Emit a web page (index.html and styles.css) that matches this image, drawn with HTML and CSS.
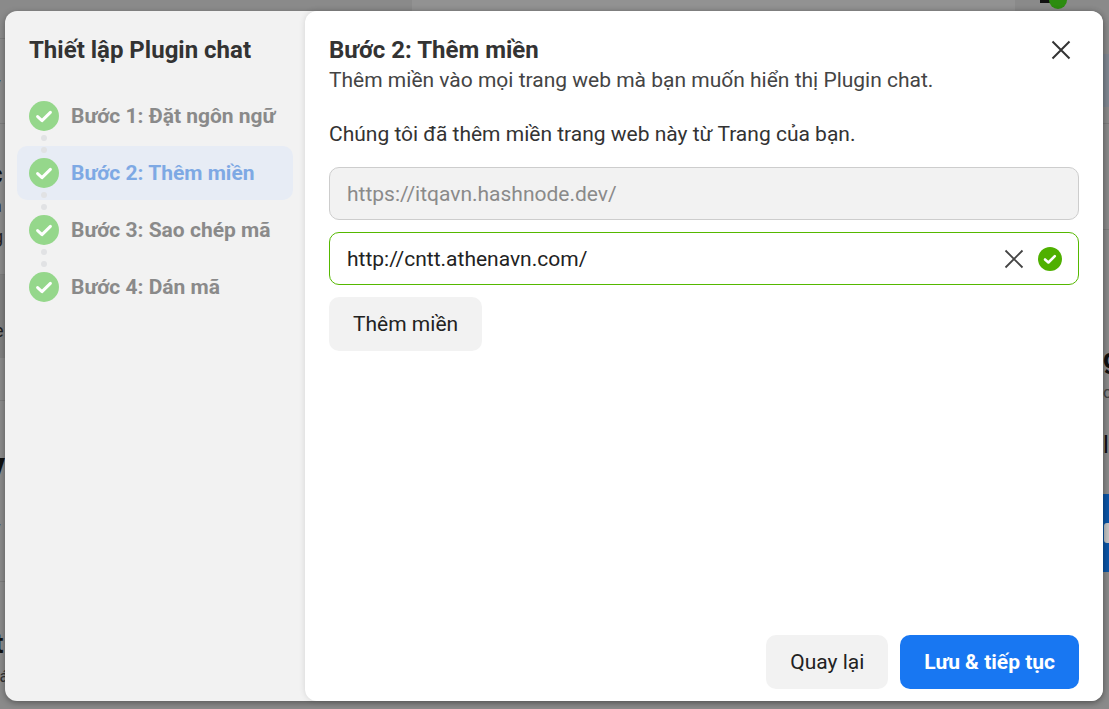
FILE: index.html
```html
<!DOCTYPE html>
<html lang="vi">
<head>
    <meta charset="UTF-8">
    <meta name="viewport" content="width=device-width, initial-scale=1.0">
    <title>Thiết lập Plugin chat</title>
    <link rel="stylesheet" href="styles.css">
</head>
<body>
    <div class="behind">
        <div class="behind-panel"></div>
        <div class="behind-band band-left"></div>
        <div class="behind-band band-right"></div>
        <div class="behind-line line-a"></div>
        <div class="behind-line line-b"></div>
        <div class="behind-line line-c"></div>
        <div class="behind-line line-d"></div>
        <div class="behind-line line-e"></div>
        <div class="behind-line line-f"></div>
        <div class="behind-line line-g"></div>
        <div class="behind-blue"></div>
        <div class="behind-avatar"></div>
        <div class="behind-dot"></div>
        <span class="behind-text bit-v">v</span>
        <span class="behind-text bit-c">c</span>
        <span class="behind-text bit-a">ả</span>
        <span class="behind-text bit-g">g</span>
        <span class="behind-text bit-e">e</span>
        <span class="behind-text bit-w">v</span>
        <span class="behind-text bit-y">v</span>
        <span class="behind-text bit-t">t</span>
        <span class="behind-text bit-s">cá</span>
        <span class="behind-text bit-r">g</span>
        <span class="behind-text bit-o">o</span>
        <span class="behind-text bit-l">l</span>
    </div>

    <div class="modal">
        <aside class="sidebar">
            <h2 class="sidebar-title">Thiết lập Plugin chat</h2>
            <ul class="steps">
                <li class="step">
                    <svg class="step-icon" viewBox="0 0 30 30"><circle cx="15" cy="15" r="15" fill="#95d78b"/><path d="M8.6 15.6l4.4 4 8.4-8.2" fill="none" stroke="#fff" stroke-width="3" stroke-linecap="round" stroke-linejoin="round"/></svg>
                    <span>Bước 1: Đặt ngôn ngữ</span>
                </li>
                <li class="step active">
                    <svg class="step-icon" viewBox="0 0 30 30"><circle cx="15" cy="15" r="15" fill="#95d78b"/><path d="M8.6 15.6l4.4 4 8.4-8.2" fill="none" stroke="#fff" stroke-width="3" stroke-linecap="round" stroke-linejoin="round"/></svg>
                    <span>Bước 2: Thêm miền</span>
                </li>
                <li class="step">
                    <svg class="step-icon" viewBox="0 0 30 30"><circle cx="15" cy="15" r="15" fill="#95d78b"/><path d="M8.6 15.6l4.4 4 8.4-8.2" fill="none" stroke="#fff" stroke-width="3" stroke-linecap="round" stroke-linejoin="round"/></svg>
                    <span>Bước 3: Sao chép mã</span>
                </li>
                <li class="step">
                    <svg class="step-icon" viewBox="0 0 30 30"><circle cx="15" cy="15" r="15" fill="#95d78b"/><path d="M8.6 15.6l4.4 4 8.4-8.2" fill="none" stroke="#fff" stroke-width="3" stroke-linecap="round" stroke-linejoin="round"/></svg>
                    <span>Bước 4: Dán mã</span>
                </li>
            </ul>
        </aside>

        <main class="content">
            <header class="content-head">
                <div>
                    <h2 class="content-title">Bước 2: Thêm miền</h2>
                    <p class="content-sub">Thêm miền vào mọi trang web mà bạn muốn hiển thị Plugin chat.</p>
                </div>
                <svg class="close-icon" viewBox="0 0 20 20"><path d="M1.5 1.5l17 17M18.5 1.5l-17 17" fill="none" stroke="#333" stroke-width="2"/></svg>
            </header>
            <p class="content-note">Chúng tôi đã thêm miền trang web này từ Trang của bạn.</p>
            <div class="field field-off">https://itqavn.hashnode.dev/</div>
            <div class="field field-ok">
                <span class="field-value">http://cntt.athenavn.com/</span>
                <svg class="clear-icon" viewBox="0 0 20 20"><path d="M1.5 1.5l17 17M18.5 1.5l-17 17" fill="none" stroke="#444" stroke-width="1.8"/></svg>
                <svg class="ok-icon" viewBox="0 0 24 24"><circle cx="12" cy="12" r="12" fill="#4fb000"/><path d="M7 12.5l3.4 3 6.4-6.4" fill="none" stroke="#fff" stroke-width="2.6" stroke-linecap="round" stroke-linejoin="round"/></svg>
            </div>
            <button class="btn add-btn">Thêm miền</button>
            <footer class="content-foot">
                <button class="btn">Quay lại</button>
                <button class="btn btn-primary">Lưu &amp; tiếp tục</button>
            </footer>
        </main>
    </div>
</body>
</html>
```

FILE: styles.css
```css
* {
    box-sizing: border-box;
}
body {
    margin: 0;
    height: 709px;
    overflow: hidden;
    background-color: #8a8a8a;
    font-family: Roboto, 'Liberation Sans', sans-serif;
    color: #1c1e21;
    padding: 11px 6px 8px 5px;
}

/* page dimmed behind the dialog */
.behind {
    position: absolute;
    top: 0;
    left: 0;
    width: 1109px;
    height: 709px;
    overflow: hidden;
}
.behind-panel {
    position: absolute;
    top: 0;
    left: 412px;
    width: 603px;
    height: 11px;
    background-color: #929292;
}
.behind-band {
    position: absolute;
}
.band-left {
    left: 0;
    top: 274px;
    width: 5px;
    height: 84px;
    background-color: #808080;
}
.band-right {
    left: 1103px;
    top: 54px;
    width: 6px;
    height: 53px;
    background-color: #7f8791;
}
.behind-line {
    position: absolute;
    height: 1px;
    background-color: #7c7c7c;
}
.line-a { left: 0; top: 38px; width: 5px; }
.line-b { left: 0; top: 123px; width: 5px; }
.line-c { left: 0; top: 274px; width: 5px; }
.line-d { left: 0; top: 400px; width: 5px; }
.line-e { left: 0; top: 581px; width: 5px; }
.line-f { left: 1103px; top: 123px; width: 6px; }
.line-g { left: 1103px; top: 229px; width: 6px; }
.behind-blue {
    position: absolute;
    left: 1103px;
    top: 494px;
    width: 6px;
    height: 78px;
    background-color: #0c55a6;
}
.behind-blue::after {
    content: '';
    position: absolute;
    left: 1px;
    top: 29px;
    width: 5px;
    height: 20px;
    border-radius: 3px 0 0 3px;
    background-color: #c4c4c4;
}
.behind-avatar {
    position: absolute;
    left: 1040px;
    top: -4px;
    width: 14px;
    height: 7px;
    background-color: #111;
}
.behind-dot {
    position: absolute;
    left: 1049px;
    top: -9px;
    width: 18px;
    height: 18px;
    border-radius: 50%;
    background-color: #2c8c10;
}
.behind-text {
    position: absolute;
    color: #111;
    line-height: 1;
}
.bit-v { left: -8px; top: 75px; font-size: 18px; }
.bit-c { left: -11px; top: 161px; font-size: 26px; font-weight: 700; }
.bit-a { left: -8px; top: 197px; font-size: 18px; color: #222; }
.bit-g { left: -7px; top: 228px; font-size: 18px; color: #222; }
.bit-e { left: -6px; top: 322px; font-size: 18px; color: #222; }
.bit-w { left: -13px; top: 448px; font-size: 36px; font-weight: 700; }
.bit-y { left: -8px; top: 519px; font-size: 18px; color: #333; }
.bit-t { left: -6px; top: 630px; font-size: 28px; font-weight: 700; }
.bit-s { left: -9px; top: 669px; font-size: 16px; color: #333; }
.bit-r { left: 1103px; top: 345px; font-size: 28px; font-weight: 700; }
.bit-o { left: 1103px; top: 385px; font-size: 16px; color: #444; }
.bit-l { left: 1103px; top: 433px; font-size: 24px; }

.modal {
    position: relative;
    display: flex;
    height: 690px;
    border-radius: 12px;
    background-color: #f2f2f2;
    box-shadow: 0 2px 6px rgba(0, 0, 0, 0.35);
}

.sidebar {
    width: 300px;
    flex-shrink: 0;
    padding: 24px 12px 0;
}
.sidebar-title {
    margin: 0 0 24px 12px;
    font-size: 24px;
    line-height: 30px;
    font-weight: 700;
    color: #333;
}
.steps {
    list-style: none;
    margin: 0;
    padding: 0;
    display: flex;
    flex-direction: column;
    gap: 3px;
}
.step {
    position: relative;
    display: flex;
    align-items: center;
    gap: 12px;
    height: 54px;
    padding-left: 12px;
    border-radius: 10px;
    font-size: 21px;
    font-weight: 700;
    color: #8a8a8a;
}
.step.active {
    background-color: #e7ecf5;
    color: #7ea9e4;
}
/* the two dots between steps */
.step:not(:last-child)::after {
    content: '';
    position: absolute;
    left: 24px;
    top: 46px;
    width: 6px;
    height: 6px;
    border-radius: 50%;
    background-color: #e1e2e4;
    box-shadow: 0 12px 0 #e1e2e4;
    z-index: 1;
}
.step-icon {
    width: 30px;
    height: 30px;
    flex-shrink: 0;
    position: relative;
    z-index: 2;
}

.content {
    flex: 1;
    display: flex;
    flex-direction: column;
    padding: 24px 24px 12px;
    background-color: #fff;
    border-radius: 12px;
    box-shadow: 0 0 6px rgba(0, 0, 0, 0.12);
}
.content-head {
    display: flex;
    justify-content: space-between;
    align-items: flex-start;
}
.content-title {
    margin: 0;
    font-size: 24px;
    line-height: 30px;
    font-weight: 700;
    color: #333;
}
.content-sub {
    margin: 0;
    font-size: 21px;
    line-height: 30px;
    color: #444;
}
.close-icon {
    width: 20px;
    height: 20px;
    margin: 5px 8px 0 0;
}
.content-note {
    margin: 24px 0 18px;
    font-size: 21px;
    line-height: 30px;
    color: #333;
}
.field {
    display: flex;
    align-items: center;
    height: 53px;
    padding: 0 16px 0 17px;
    border-radius: 10px;
    font-size: 21px;
}
.field-off {
    background-color: #f2f2f2;
    border: 1px solid #cdcdcd;
    color: #8a8a8a;
}
.field-ok {
    margin-top: 12px;
    border: 1px solid #55b800;
    color: #222;
}
.field-value {
    flex: 1;
}
.clear-icon {
    width: 20px;
    height: 20px;
    margin-right: 14px;
}
.ok-icon {
    width: 24px;
    height: 24px;
}
.btn {
    height: 54px;
    padding: 0 24px;
    border: none;
    border-radius: 10px;
    background-color: #f2f2f2;
    font-family: inherit;
    font-size: 21px;
    color: #222;
}
.add-btn {
    align-self: flex-start;
    margin-top: 12px;
}
.content-foot {
    margin-top: auto;
    display: flex;
    justify-content: flex-end;
    gap: 12px;
}
.btn-primary {
    background-color: #1877f2;
    color: #fff;
    font-weight: 700;
}
```
